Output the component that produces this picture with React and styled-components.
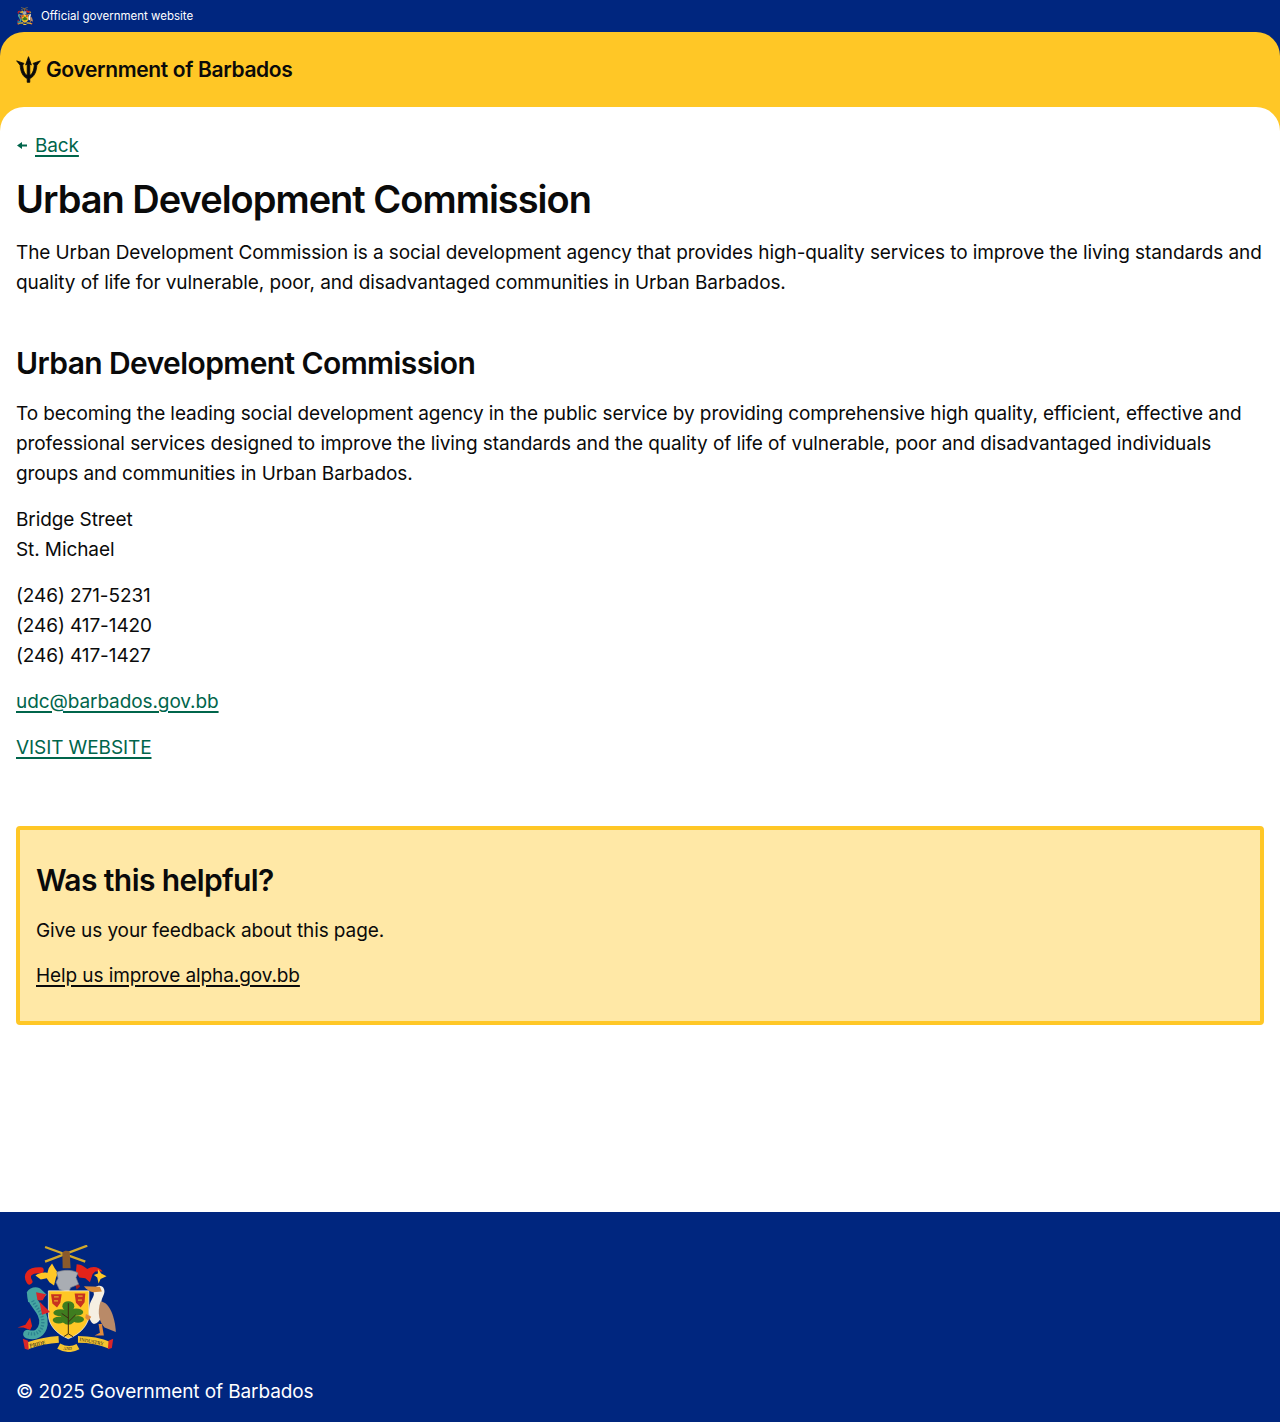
import React from 'react';
import styled, { createGlobalStyle } from 'styled-components';

const GlobalStyle = createGlobalStyle`
  html, body {
    margin: 0;
    padding: 0;
    background: #fff;
  }
  body {
    font-family: "Inter", "Liberation Sans", sans-serif;
    color: #0a0a0a;
  }
  * { box-sizing: border-box; }
`;

const Page = styled.div`
  min-height: 1422px;
  display: flex;
  flex-direction: column;
  background: #00267f;
`;

const OfficialBar = styled.div`
  height: 32px;
  padding: 0 16px;
  display: flex;
  align-items: center;
  gap: 8px;
  color: #fff;
  font-size: 11.5px;
`;

const Shell = styled.div`
  flex: 1;
  display: flex;
  flex-direction: column;
  background: #ffc726;
  border-radius: 24px 24px 0 0;
`;

const Header = styled.header`
  height: 75px;
  padding: 0 16px;
  display: flex;
  align-items: center;
  gap: 5px;
  font-size: 21px;
  font-weight: 600;
  letter-spacing: -0.36px;
`;

const Main = styled.main`
  flex: 1;
  background: #fff;
  border-radius: 24px 24px 0 0;
  padding: 24px 16px 0;
`;

const BackRow = styled.div`
  display: flex;
  align-items: center;
  gap: 8px;
  font-size: 19px;
  line-height: 30px;
  letter-spacing: -0.125px;
`;

const Link = styled.a`
  color: ${(p) => p.$color || '#00654b'};
  text-decoration: underline;
  text-decoration-thickness: 2px;
  text-underline-offset: 3px;
`;

const Title = styled.h1`
  margin: 13px 0 14px;
  font-size: 38px;
  line-height: 50px;
  font-weight: 600;
  letter-spacing: -1px;
`;

const Heading = styled.h2`
  margin: ${(p) => p.$margin};
  font-size: 30px;
  line-height: 40px;
  font-weight: 600;
  letter-spacing: -0.6px;
`;

const Text = styled.p`
  margin: 0 0 ${(p) => p.$gap ?? 16}px;
  font-size: 19px;
  line-height: 30px;
  letter-spacing: -0.09px;
`;

const Feedback = styled.section`
  margin-top: 63px;
  padding: 30px 16px 30px;
  border: 4px solid #ffc726;
  border-radius: 4px;
  background: #ffe8a6;
`;

const FooterBody = styled.footer`
  padding: 33px 16px 15px;
  background: #00267f;
  color: #fff;
  font-size: 19px;
  line-height: 30px;
  letter-spacing: -0.1px;
`;

const CrestBox = styled.div`
  margin-bottom: 25px;
`;

const serif = 'Liberation Serif, serif';

function Crest({ width, height }) {
  return (
    <svg width={width} height={height} viewBox="48 30 300 322" style={{ display: 'block' }}>
      {/* sugar canes and arm */}
      <path d="M135 36L256 80M135 80L262 32" stroke="#d2a92c" strokeWidth="7" />
      <path d="M187 52c6-6 16-6 22-2l3 50h-24z" fill="#8a5a2b" />
      {/* mantling */}
      <path d="M88 140c-12-20 0-36 34-34" stroke="#e2231a" strokeWidth="18" fill="none" strokeLinecap="round" />
      <path d="M106 122c14-10 28-10 36-8l4-14 10-14 8 14 10 14-6 14-6 24-14-10-8-12-18 4z" fill="#ffc726" />
      <path d="M230 88c16 0 24 10 32 14 14-10 36-8 46 8l-22 0-8 8-8 24-14-12-18-2-10-18z" fill="#e2231a" />
      <path d="M294 102l10 14 16 8-18 8-6 14-4-18-10-8 12-4z" fill="#ffc726" />
      <path d="M226 150c6-4 14-2 14 6l-10 8z" fill="#a11f1f" />
      {/* helmet */}
      <path d="M170 112c20-8 48-8 64 2l-6 14 8 20-24 10-6 14-28-8-10-22 6-12z" fill="#a9adb3" stroke="#7d8188" strokeWidth="2" />
      {/* shield */}
      <path d="M145 168h122v72c0 30-26 58-62 72-36-14-60-42-60-72z" fill="#ffc726" stroke="#fff" strokeWidth="2" />
      <path d="M153 178h32l-4 26-10 14-14-12zM224 176h32l-2 26-12 16-14-14z" fill="#c8321f" />
      <path d="M162 186h14M162 198h12M234 184h14M234 196h12" stroke="#e8a62a" strokeWidth="4" />
      <g fill="#3f7d1f">
        <ellipse cx="205" cy="214" rx="18" ry="15" />
        <ellipse cx="182" cy="234" rx="22" ry="11" />
        <ellipse cx="228" cy="232" rx="22" ry="11" />
        <ellipse cx="176" cy="256" rx="18" ry="10" />
        <ellipse cx="234" cy="254" rx="18" ry="10" />
        <ellipse cx="205" cy="246" rx="22" ry="24" />
      </g>
      <path d="M205 205v92M205 250l-20-14M205 262l22-22M205 297l-14 9M205 297l14 9" stroke="#3d2a10" strokeWidth="3" fill="none" />
      {/* dolphin */}
      <path d="M98 176c-14 26 38 48 32 92-4 26-24 38-48 30" stroke="#46a5a2" strokeWidth="26" fill="none" strokeLinecap="round" />
      <path d="M96 180c-8 26 36 46 32 88-4 24-22 34-44 28" stroke="#2c8290" strokeWidth="10" strokeDasharray="4 5" fill="none" />
      <path d="M80 172c10-18 36-20 46-6l14 14-18 16-20-2-18 8z" fill="#46a5a2" />
      <path d="M108 172l30 6-10 18-16 0zM118 200l32 32-24 8z" fill="#d8262a" />
      <path d="M52 278l24-8 14-22 6 26-6 12-20-8z" fill="#e2231a" />
      {/* pelican */}
      <path d="M292 154c16-6 26 10 20 24-6 14-10 22-6 34 4 24-2 52-24 56-16-6-16-34-14-52 2-16 12-26 14-38-2-12 0-20 10-24z" fill="#f5efe2" />
      <path d="M302 200c28 2 44 50 46 92l-34-14c-14-14-24-42-12-78z" fill="#b98a68" />
      <path d="M252 154l48 2 6 14-26 2c-12-2-22-10-28-18z" fill="#d58a3a" />
      <path d="M296 268l4 26-16 8h28l-6-34zM258 238l16 8-8 12-10-8z" fill="#e08a3c" />
      {/* motto scroll */}
      <path d="M176 314c-36 2-68 10-96 20" stroke="#f4c430" strokeWidth="21" fill="none" />
      <path d="M234 314c34 0 68 6 96 18" stroke="#f4c430" strokeWidth="21" fill="none" />
      <path d="M176 334c18 10 40 12 58 2" stroke="#f4c430" strokeWidth="18" fill="none" />
      <path d="M68 312l16 6 2 28-12-4zM340 312l-14 6-2 26 12-4z" fill="#d8262a" />
      <text x="90" y="339" fontSize="17" fontFamily={serif} fill="#222" transform="rotate(-12 90 339)">PRIDE</text>
      <text x="190" y="346" fontSize="12" fontFamily={serif} fill="#222">AND</text>
      <text x="238" y="319" fontSize="15" fontFamily={serif} fill="#222" transform="rotate(10 238 319)">INDUSTRY</text>
    </svg>
  );
}

function Trident() {
  return (
    <svg width="25" height="27" viewBox="46 166 78 84" style={{ display: 'block' }}>
      <path
        fill="#0a0a0a"
        stroke="#0a0a0a"
        strokeWidth="2.500"
        d="M85 168L94 194L89 191V226C96 224 102 212 103 194L99 189L122 181L111 195C110 215 102 232 89 236V248H81V236C68 232 60 215 59 195L48 181L71 189L67 194C68 212 74 224 81 226V191L76 194Z"
      />
    </svg>
  );
}

function BackArrow() {
  return (
    <svg width="11" height="8" viewBox="0 0 11 8" style={{ display: 'block' }}>
      <path d="M1 3.500L6 0V2.500H11V4.500H6V7z" fill="#00654b" />
    </svg>
  );
}

export default function App() {
  return (
    <Page>
      <GlobalStyle />
      <OfficialBar>
        <Crest width={17} height={18} />
        Official government website
      </OfficialBar>
      <Shell>
        <Header>
          <Trident />
          Government of Barbados
        </Header>
        <Main>
          <BackRow>
            <BackArrow />
            <Link href="#">Back</Link>
          </BackRow>
          <Title>Urban Development Commission</Title>
          <Text>
            The Urban Development Commission is a social development agency that provides high-quality services to improve the living standards and quality of life for vulnerable, poor, and disadvantaged communities in Urban Barbados.
          </Text>
          <Heading $margin="45px 0 16px">Urban Development Commission</Heading>
          <Text>
            To becoming the leading social development agency in the public service by providing comprehensive high quality, efficient, effective and professional services designed to improve the living standards and the quality of life of vulnerable, poor and disadvantaged individuals groups and communities in Urban Barbados.
          </Text>
          <Text>
            Bridge Street<br />St. Michael
          </Text>
          <Text>
            (246) 271-5231<br />(246) 417-1420<br />(246) 417-1427
          </Text>
          <Text>
            <Link href="#">udc@barbados.gov.bb</Link>
          </Text>
          <Text>
            <Link href="#">VISIT WEBSITE</Link>
          </Text>
          <Feedback>
            <Heading $margin="0 0 16px">Was this helpful?</Heading>
            <Text $gap={15}>Give us your feedback about this page.</Text>
            <Text $gap={0}>
              <Link href="#" $color="#0a0a0a">Help us improve alpha.gov.bb</Link>
            </Text>
          </Feedback>
        </Main>
      </Shell>
      <FooterBody>
        <CrestBox>
          <Crest width={100} height={107} />
        </CrestBox>
        © 2025 Government of Barbados
      </FooterBody>
    </Page>
  );
}
